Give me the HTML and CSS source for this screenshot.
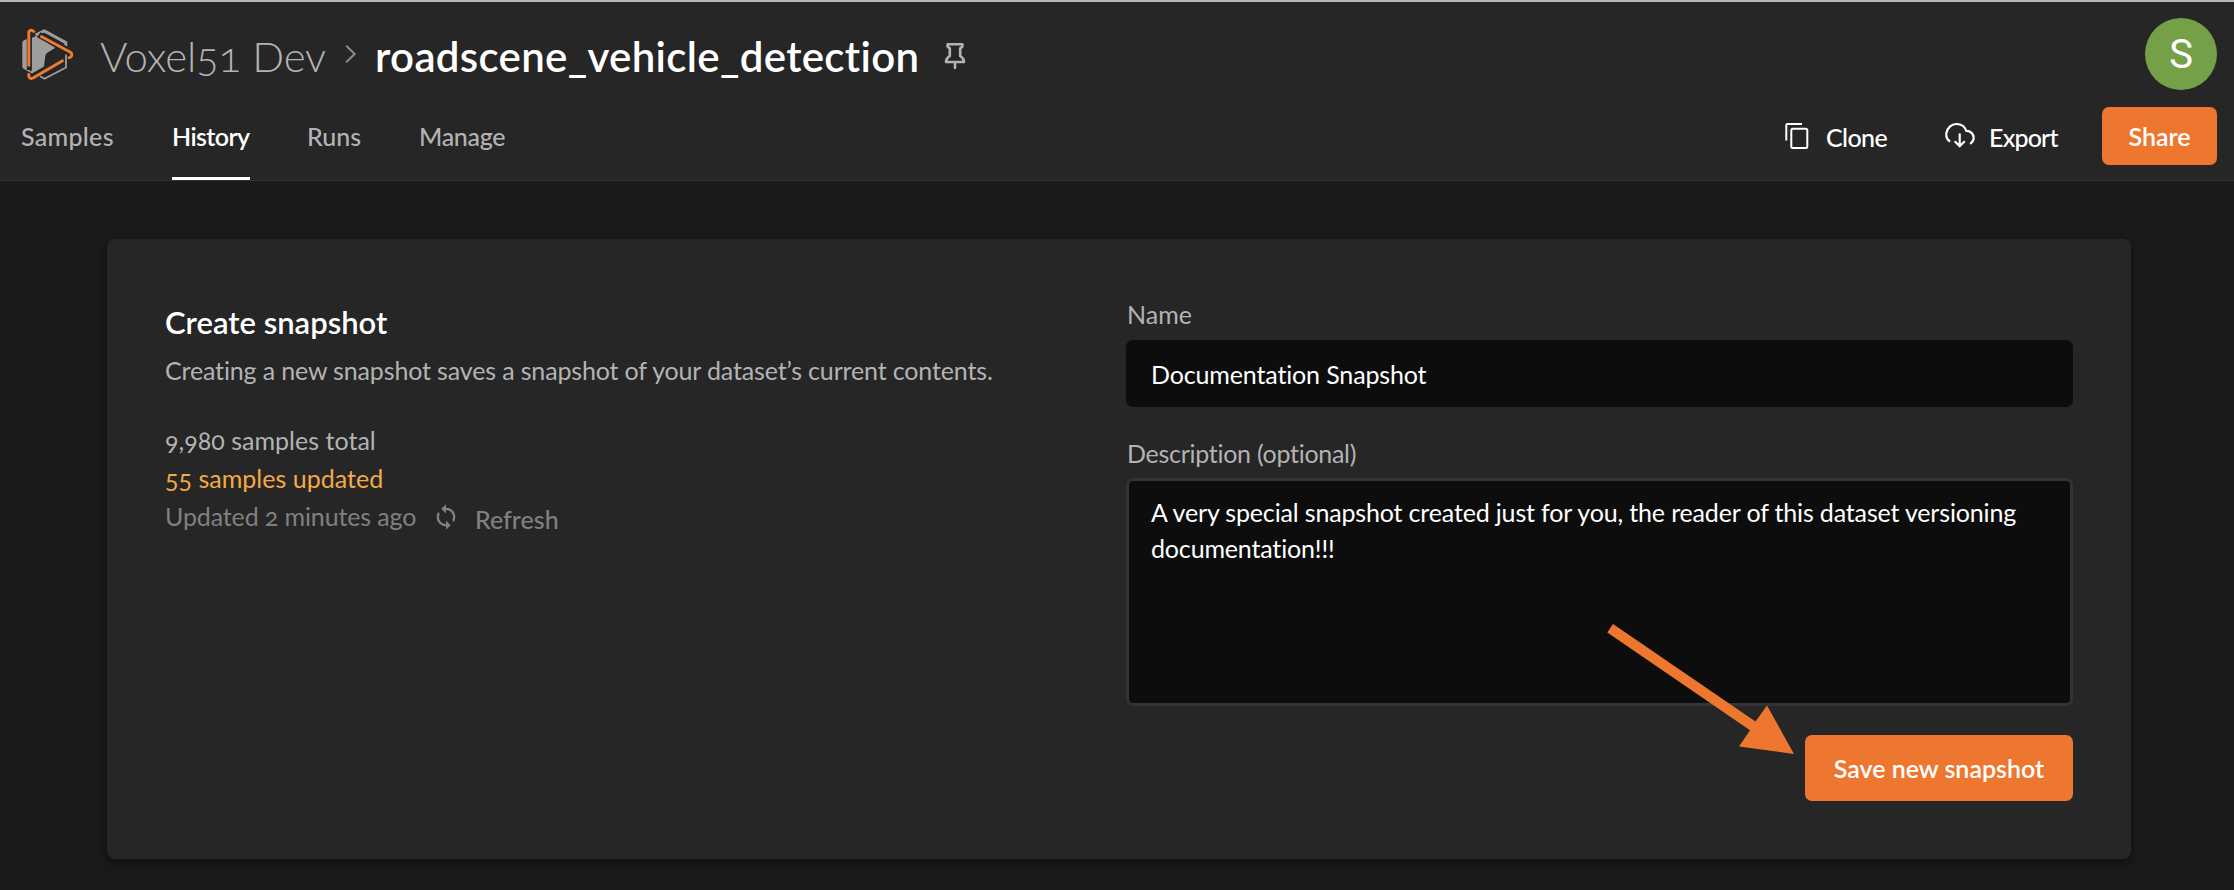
FILE: index.html
```html
<!DOCTYPE html>
<html lang="en">
<head>
<meta charset="utf-8">
<title>roadscene_vehicle_detection</title>
<link rel="stylesheet" href="styles.css">
</head>
<body>
<header class="header">
  <div class="brand-row">
    <svg class="logo" viewBox="20 27 54 54" fill="none" stroke-linejoin="round">
      <path d="M22.3 43 Q22.3 40.5 25 39.8 L27 39 V69 L31.5 71.5 V38 L36 36 L55.4 47.7 L47 53 Q45.4 54.3 45.3 56 L44 66.5 L32 73.5 L23.5 68.8 Q22.3 68 22.3 66.5Z" fill="#9e9e9e"/>
      <path d="M35.5 35.2 L44.3 30.9 L65.8 42.6 V46.5" stroke="#9e9e9e" stroke-width="3"/>
      <path d="M66 54.5 V67.5 L44.5 78.8 L40 76.3" stroke="#9e9e9e" stroke-width="1.8"/>
      <path d="M29.3 70 V33" stroke="#262626" stroke-width="5"/>
      <path d="M39 34.8 L71 51.8" stroke="#262626" stroke-width="6"/>
      <path d="M34.5 32.4 Q33 30 30.5 30.3 Q28.8 30.7 28.8 33 V66.5" stroke="#f07b30" stroke-width="2.9"/>
      <path d="M40.3 36 L70 52 Q73.2 54.2 70.8 57 L68 58.3" stroke="#f07b30" stroke-width="2.9"/>
      <path d="M63.5 60.3 L33 78 Q29.2 79.5 28.8 76 V73.3" stroke="#f07b30" stroke-width="2.9"/>
    </svg>
    <span class="org">Voxel51 Dev</span>
    <svg class="chevron" viewBox="0 0 12 20"><path d="M1.2 1.8 L9.7 10 L1.2 18.2" fill="none" stroke="#8c8c8c" stroke-width="2"/></svg>
    <h1 class="dataset">roadscene_vehicle_detection</h1>
    <svg class="pin" viewBox="0 0 22 28" fill="none" stroke="#b3b3b3" stroke-width="2.6" stroke-linejoin="round" stroke-linecap="round"><path d="M3.6 2.3 H18.4 Q19 5.3 16.2 6.2 V14 Q20 16.3 20 20 H2 Q2 16.3 5.8 14 V6.2 Q3 5.3 3.6 2.3Z M11 20 V26"/></svg>
    <div class="avatar">S</div>
  </div>
  <div class="nav-row">
    <nav class="tabs">
      <a class="tab tab-samples">Samples</a>
      <a class="tab tab-history active">History</a>
      <a class="tab tab-runs">Runs</a>
      <a class="tab tab-manage">Manage</a>
    </nav>
    <div class="actions">
      <a class="action action-clone">
        <svg class="icon-clone" viewBox="0 0 24 28" fill="none" stroke="#fff" stroke-width="2"><path d="M1.3 18.5 V3 Q1.3 2 2.3 2 H17"/><rect x="6.3" y="6.8" width="16" height="19.2" rx="1.5"/></svg>
        <span>Clone</span>
      </a>
      <a class="action action-export">
        <svg class="icon-export" viewBox="0 0 30 28" fill="none" stroke="#fff" stroke-width="2.2" stroke-linecap="round" stroke-linejoin="round"><path d="M4.4 19 C1.5 17 1 14 1.3 11.5 C2 5.8 6.5 2 11.5 2 C16.5 2 20 4.8 21.3 8.9 C25.5 8.7 28.7 12 28.7 15.8 C28.7 18.3 27.5 20 25.8 21.3"/><path d="M14.7 12.3 V24 M10.2 19.8 L14.7 24.3 L19.2 19.8"/></svg>
        <span>Export</span>
      </a>
      <button class="btn share">Share</button>
    </div>
  </div>
</header>
<main class="card">
  <section class="info">
    <h2 class="title">Create snapshot</h2>
    <p class="desc">Creating a new snapshot saves a snapshot of your dataset’s current contents.</p>
    <p class="stat total">9,980 samples total</p>
    <p class="stat updated">55 samples updated</p>
    <div class="refresh-row">
      <span class="ago">Updated 2 minutes ago</span>
      <svg class="icon-sync" viewBox="0 0 24 24" fill="#808080"><path d="M12 4V1L8 5l4 4V6c3.310 0 6 2.690 6 6 0 1.010-.25 1.970-.7 2.800l1.460 1.460C19.540 15.030 20 13.570 20 12c0-4.420-3.580-8-8-8zm0 14c-3.310 0-6-2.690-6-6 0-1.010.25-1.970.7-2.800L5.240 7.740C4.460 8.970 4 10.430 4 12c0 4.420 3.580 8 8 8v3l4-4-4-4v3z"/></svg>
      <span class="refresh">Refresh</span>
    </div>
  </section>
  <section class="form">
    <label class="label name">Name</label>
    <div class="input">Documentation Snapshot</div>
    <label class="label description">Description (optional)</label>
    <div class="textarea">A very special snapshot created just for you, the reader of this dataset versioning<br>documentation!!!</div>
    <button class="btn save">Save new snapshot</button>
  </section>
</main>
<svg class="arrow" viewBox="0 0 190 134"><path d="M8 2 L150.500 99.500 L162 83.500 L189 132 L134 124.500 L145 108.300 L2.300 10.500Z" fill="#ee7730"/></svg>
</body>
</html>
```
FILE: styles.css
```css
* { box-sizing: border-box; }
body {
  margin: 0;
  height: 890px;
  overflow: hidden;
  background: #1a1a1a;
  color: #fff;
  font: 25px/36px Lato, sans-serif;
  font-variant-ligatures: none;
  font-variant-numeric: oldstyle-nums;
  white-space: nowrap;
}
h1, h2, p { margin: 0; }
.header {
  height: 181px;
  background: #262626;
  border-top: 2px solid #bfb4b3;
  border-bottom: 1px solid #333;
}
.brand-row {
  display: flex;
  align-items: center;
  height: 90px;
  padding: 16px 17px 2px 20px;
}
.logo { width: 54px; height: 54px; }
.org {
  width: 231px;
  margin-left: 26px;
  padding-top: 3px;
  font-size: 42px;
  font-weight: 300;
  letter-spacing: -.2px;
  color: #b3b3b3;
}
.chevron { width: 12px; height: 20px; margin-left: 14px; }
.dataset {
  width: 545px;
  margin-left: 18px;
  padding-top: 3px;
  font-size: 42px;
  font-weight: 600;
  letter-spacing: .32px;
}
.pin { width: 22px; height: 28px; margin-left: 24px; margin-top: 4px; }
.avatar {
  width: 72px;
  height: 72px;
  margin-left: auto;
  border-radius: 50%;
  background: #76a048;
  font: 40px/73px Roboto, sans-serif;
  text-align: center;
}
.nav-row {
  display: flex;
  justify-content: space-between;
  align-items: center;
  height: 88px;
  padding: 0 17px 0 21px;
}
.tabs { display: flex; gap: 58px; height: 88px; font-weight: 500; color: #b3b3b3; }
.tab { line-height: 88px; height: 88px; }
.tab-samples { width: 93px; letter-spacing: .3px; }
.tab-history { width: 78px; letter-spacing: -.6px; }
.tab-runs { width: 54px; margin-left: -1px; }
.tab-manage { letter-spacing: -.3px; }
.active { color: #fff; font-weight: 600; border-bottom: 3px solid #fff; }
.actions { display: flex; align-items: center; font-weight: 500; }
.action { display: flex; align-items: center; }
.action span { padding-top: 1px; }
.icon-clone { width: 24px; height: 28px; margin-right: 17px; }
.icon-export { width: 30px; height: 28px; margin-right: 14px; }
.action-clone { width: 160px; letter-spacing: -.6px; }
.action-export { width: 157px; letter-spacing: -.8px; }
.btn {
  padding: 0;
  border: 0;
  border-radius: 7px;
  background: #ee7730;
  color: #fff;
  font: 600 25px/36px Lato, sans-serif;
}
.share { width: 115px; height: 58px; }
.card {
  display: flex;
  justify-content: space-between;
  width: 2024px;
  height: 620px;
  margin: 58px 0 0 107px;
  padding: 58px;
  border-radius: 8px;
  background: #262626;
  box-shadow: 0 4px 8px rgba(0, 0, 0, .45);
}
.title { font-size: 31px; line-height: 50px; font-weight: 600; }
.desc { margin: 5px 0 34px; letter-spacing: -.15px; color: #b3b3b3; }
.stat { line-height: 37.5px; }
.total { letter-spacing: .02px; color: #b3b3b3; }
.updated { letter-spacing: .02px; color: #f5a945; }
.refresh-row { display: flex; align-items: center; height: 38px; color: #808080; }
.ago { width: 267px; letter-spacing: -.12px; }
.icon-sync { width: 28px; height: 28px; margin-top: 2px; }
.refresh { margin-left: 15px; padding-top: 5px; font-weight: 500; }
.form { display: flex; flex-direction: column; width: 947px; }
.label { height: 35px; line-height: 35px; padding-left: 1px; color: #b3b3b3; }
.description { margin-top: 29px; letter-spacing: -.28px; }
.input {
  height: 67px;
  margin-top: 8px;
  padding-left: 25px;
  line-height: 69px;
  border-radius: 7px;
  background: #0d0d0d;
  letter-spacing: -.14px;
}
.textarea {
  height: 229px;
  margin-top: 7px;
  padding: 13px 22px;
  border: 3px solid #333;
  border-radius: 7px;
  background: #0d0d0d;
  letter-spacing: -.16px;
}
.save { width: 268px; height: 66px; margin: 29px 0 0 auto; }
/* Callout arrow drawn over the form */
.arrow { position: absolute; left: 1605px; top: 622px; width: 190px; height: 134px; }
```
